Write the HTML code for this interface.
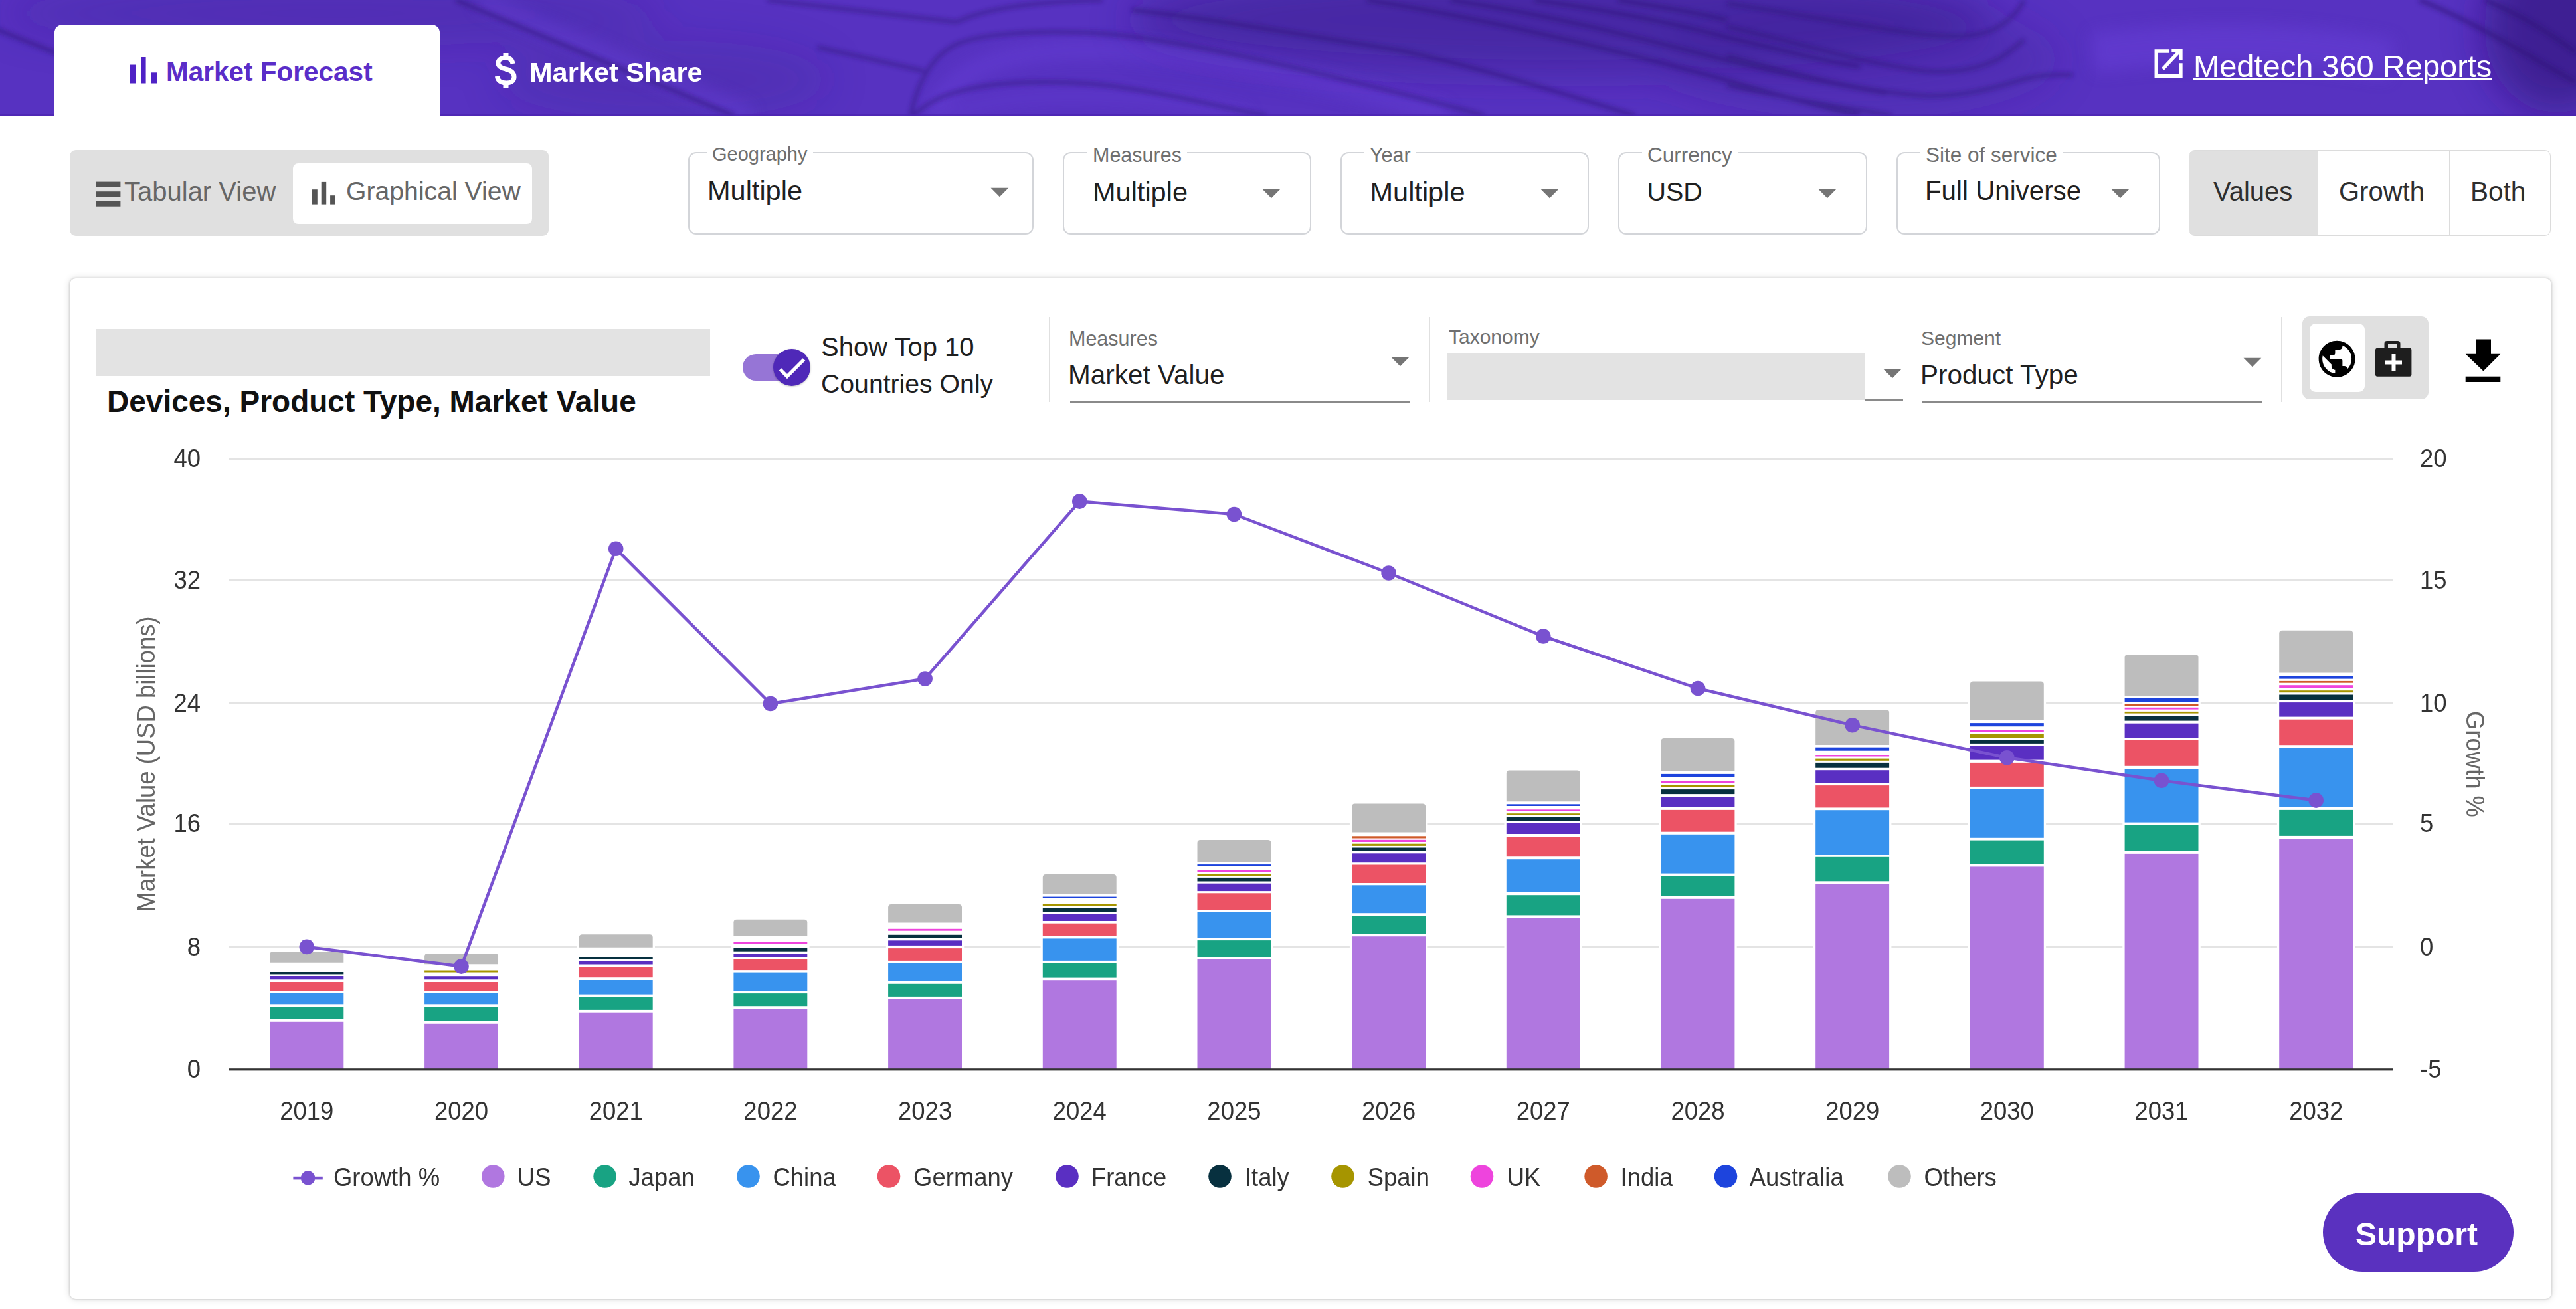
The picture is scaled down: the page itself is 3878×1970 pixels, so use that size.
<!DOCTYPE html>
<html><head><meta charset="utf-8">
<style>
html,body{margin:0;padding:0;width:3878px;height:1970px;overflow:hidden;background:#fff;font-family:"Liberation Sans",sans-serif;}
.a{position:absolute;white-space:nowrap;line-height:1;}
.ct{font-family:"Liberation Sans",sans-serif;font-size:39px;fill:#333;}
.sel{position:absolute;box-sizing:border-box;border:2.8px solid #d3d5d9;border-radius:12px;}
.lbl{position:absolute;white-space:nowrap;line-height:1;font-size:30px;color:#6f6f6f;background:#fff;padding:0 8px;}
.val{position:absolute;white-space:nowrap;line-height:1;font-size:41px;color:#1f1f1f;}
</style></head><body>
<!-- header -->
<div class="a" style="left:0;top:0;width:3878px;height:174px;background:#5430bd;overflow:hidden;">
<svg width="3878" height="174" style="position:absolute;left:0;top:0">
<defs>
<filter id="b4" x="-10%" y="-50%" width="120%" height="200%"><feGaussianBlur stdDeviation="3.5"/></filter>
<filter id="b12" x="-20%" y="-100%" width="140%" height="300%"><feGaussianBlur stdDeviation="12"/></filter>
<filter id="b30" x="-50%" y="-200%" width="200%" height="500%"><feGaussianBlur stdDeviation="30"/></filter>
</defs>
<rect width="3878" height="174" fill="#5732c1"/>
<g filter="url(#b30)">
<ellipse cx="2350" cy="30" rx="650" ry="80" fill="#3b1d8e" opacity="0.55"/>
<ellipse cx="2800" cy="90" rx="300" ry="90" fill="#3b1d8e" opacity="0.25"/>
<ellipse cx="3850" cy="40" rx="110" ry="130" fill="#2e1574" opacity="0.6"/>
<ellipse cx="500" cy="20" rx="500" ry="50" fill="#3b1d8e" opacity="0.25"/>
<ellipse cx="1000" cy="120" rx="250" ry="60" fill="#3b1d8e" opacity="0.2"/>
</g>
<g fill="none" stroke="#6a42dc" filter="url(#b12)" opacity="0.45">
<path d="M1400,174 C1430,110 1500,75 1640,75 C1800,78 2000,120 2180,174" stroke-width="26"/>
<path d="M1420,174 C1480,150 1560,140 1700,148 C1800,155 1850,165 1880,174" stroke-width="14"/>
<path d="M3150,80 C3300,60 3450,60 3600,90" stroke-width="60"/>
<path d="M720,0 L1130,174" stroke-width="24"/>
</g>
<g fill="none" stroke="#2f1677" filter="url(#b4)" opacity="0.6">
<path d="M-10,42 L90,82" stroke-width="6"/>
<path d="M686,0 L1105,174" stroke-width="6"/>
<path d="M1155,0 L1440,33" stroke-width="5"/>
<path d="M1231,71 L1391,107" stroke-width="5"/>
<path d="M1440,33 C1480,15 1540,3 1660,0" stroke-width="5"/>
<path d="M1371,174 C1380,130 1400,85 1441,66 C1480,50 1560,45 1654,50 C1750,56 1900,90 2007,116 C2090,136 2159,152 2234,174" stroke-width="5"/>
<path d="M1375,174 C1400,150 1430,136 1500,127 C1580,120 1650,125 1704,134 C1780,145 1830,160 1906,174" stroke-width="5"/>
<path d="M1704,15 C1800,25 1950,50 2108,76 C2200,95 2320,130 2461,174" stroke-width="6"/>
<path d="M2058,0 C2250,30 2450,80 2600,121 C2700,150 2760,165 2800,174" stroke-width="6"/>
<path d="M2184,0 C2350,25 2480,60 2600,91 C2700,115 2780,130 2840,140" stroke-width="6"/>
<path d="M2310,0 C2420,15 2520,35 2600,56 C2700,80 2760,95 2800,100" stroke-width="6"/>
<path d="M2436,0 C2500,10 2560,20 2600,30" stroke-width="6"/>
<path d="M2600,5 C2700,20 2800,40 2898,52 C2940,56 2972,56 3000,45 C3025,32 3040,15 3047,0" stroke-width="5"/>
<path d="M2600,40 C2700,62 2800,95 2898,107 C2940,110 2980,104 3010,88 C3030,75 3040,65 3047,60" stroke-width="5"/>
<path d="M2600,84 C2700,110 2800,138 2898,144 C2960,146 3010,130 3047,119 C3080,112 3100,112 3121,113" stroke-width="5"/>
<path d="M2600,129 C2700,150 2780,162 2848,174" stroke-width="5"/>
<path d="M3642,0 C3720,30 3800,80 3878,124" stroke-width="7"/>
<path d="M3741,0 C3790,20 3840,50 3878,79" stroke-width="7"/>
</g>
<rect x="0" y="171" width="3878" height="3" fill="#4a22ae" opacity="0.6"/>
</svg>
</div>
<!-- active tab -->
<div class="a" style="left:82px;top:37px;width:580px;height:137px;background:#fff;border-radius:12px 12px 0 0;"></div>
<svg class="a" style="left:190px;top:80px" width="50" height="50">
<rect x="6" y="17.5" width="9" height="28" fill="#4f22c6"/>
<rect x="22.6" y="6" width="7" height="39.5" fill="#4f22c6"/>
<rect x="37.6" y="29.3" width="8.5" height="16.2" fill="#4f22c6"/>
</svg>
<div class="a" style="left:250px;top:88.2px;font-size:40.5px;font-weight:bold;color:#5a2dc8;">Market Forecast</div>
<svg class="a" style="left:740px;top:74px" width="44" height="64" viewBox="0 0 44 64">
<path d="M32,22 C31,15 26,13 21,13 C14,13 10,16.5 10,21 C10,26 14,28 21,30 C29,32 34,35 34,42 C34,48 29,51 22,51 C14,51 9,47 8.5,41" fill="none" stroke="#fff" stroke-width="7"/>
<rect x="17.5" y="6" width="8" height="9" fill="#fff"/><rect x="17.5" y="49" width="8" height="9" fill="#fff"/>
</svg>
<div class="a" style="left:797px;top:87.5px;font-size:41.5px;font-weight:bold;color:#fff;">Market Share</div>
<!-- medtech link -->
<svg class="a" style="left:3240px;top:71px" width="50" height="50" viewBox="0 0 50 50">
<path d="M25.3,6 H6.2 V43.5 H43 V24.3" fill="none" stroke="#fff" stroke-width="5.3"/>
<path d="M16,33 L42,5" stroke="#fff" stroke-width="5.3" fill="none"/>
<path d="M29.3,5 H43 V20" fill="none" stroke="#fff" stroke-width="5.3"/>
</svg>
<div class="a" style="left:3302px;top:75.5px;font-size:47px;color:#fff;text-decoration:underline;text-decoration-thickness:3px;text-underline-offset:1.5px;">Medtech 360 Reports</div>

<!-- view toggle -->
<div class="a" style="left:105px;top:226px;width:721px;height:129px;background:#e0e0e0;border-radius:9px;"></div>
<div class="a" style="left:441px;top:245.5px;width:360px;height:91px;background:#fff;border-radius:8px;"></div>
<svg class="a" style="left:140px;top:268px" width="50" height="50">
<rect x="5" y="5.6" width="36.4" height="8.2" fill="#555"/>
<rect x="5" y="20.2" width="36.4" height="8.2" fill="#555"/>
<rect x="5" y="34.5" width="36.4" height="8.2" fill="#555"/>
</svg>
<div class="a" style="left:187px;top:267.5px;font-size:40px;color:#666;">Tabular View</div>
<svg class="a" style="left:460px;top:265px" width="50" height="50">
<rect x="9.6" y="20.2" width="8.2" height="22.4" fill="#555"/>
<rect x="23.7" y="8.9" width="7.5" height="33.7" fill="#555"/>
<rect x="37.1" y="29.2" width="7.2" height="13.4" fill="#555"/>
</svg>
<div class="a" style="left:521px;top:267.5px;font-size:39.2px;color:#666;">Graphical View</div>

<!-- selects -->
<div class="sel" style="left:1035.5px;top:228.5px;width:520.5px;height:124px;"></div>
<div class="lbl" style="left:1064px;top:218px;font-size:29px;">Geography</div>
<div class="val" style="left:1065px;top:265.5px;font-size:41.5px;">Multiple</div>
<svg class="a" style="left:1491px;top:282px" width="28" height="15"><path d="M0.5,0.7 H27.3 L13.9,14.2 Z" fill="#757575"/></svg>

<div class="sel" style="left:1599.5px;top:228.5px;width:374px;height:124px;"></div>
<div class="lbl" style="left:1637px;top:218px;font-size:30.5px;">Measures</div>
<div class="val" style="left:1645px;top:267.5px;font-size:41.5px;">Multiple</div>
<svg class="a" style="left:1900px;top:284px" width="28" height="15"><path d="M0.5,0.7 H27.3 L13.9,14.2 Z" fill="#757575"/></svg>

<div class="sel" style="left:2017.5px;top:228.5px;width:374px;height:124px;"></div>
<div class="lbl" style="left:2054px;top:218px;font-size:30.5px;">Year</div>
<div class="val" style="left:2062.5px;top:267.5px;font-size:41.5px;">Multiple</div>
<svg class="a" style="left:2319px;top:284px" width="28" height="15"><path d="M0.5,0.7 H27.3 L13.9,14.2 Z" fill="#757575"/></svg>

<div class="sel" style="left:2435.5px;top:228.5px;width:375px;height:124px;"></div>
<div class="lbl" style="left:2472px;top:218px;font-size:31.5px;">Currency</div>
<div class="val" style="left:2479.5px;top:268.5px;font-size:39.5px;">USD</div>
<svg class="a" style="left:2737px;top:284px" width="28" height="15"><path d="M0.5,0.7 H27.3 L13.9,14.2 Z" fill="#757575"/></svg>

<div class="sel" style="left:2854.5px;top:228.5px;width:397px;height:124px;"></div>
<div class="lbl" style="left:2891px;top:218px;font-size:31.5px;">Site of service</div>
<div class="val" style="left:2898px;top:268px;font-size:40.3px;">Full Universe</div>
<svg class="a" style="left:3178px;top:284px" width="28" height="15"><path d="M0.5,0.7 H27.3 L13.9,14.2 Z" fill="#757575"/></svg>

<!-- values/growth/both -->
<div class="a" style="left:3295px;top:226px;width:545px;height:129px;box-sizing:border-box;border:1.5px solid #dcdcdc;border-radius:9px;overflow:hidden;">
<div class="a" style="left:0;top:0;width:193px;height:129px;background:#e0e0e0;"></div>
<div class="a" style="left:391px;top:0;width:1.5px;height:129px;background:#dcdcdc;"></div>
</div>
<div class="a" style="left:3332px;top:267.5px;font-size:40px;color:#2e2e2e;">Values</div>
<div class="a" style="left:3521px;top:267.5px;font-size:40px;color:#2e2e2e;">Growth</div>
<div class="a" style="left:3719px;top:267.5px;font-size:40.5px;color:#2e2e2e;">Both</div>

<!-- card -->
<div class="a" style="left:105px;top:418.5px;width:3736px;height:1536.5px;background:#fff;border-radius:9px;box-shadow:0 0 3px 1px rgba(0,0,0,0.13),0 0 11px 1px rgba(0,0,0,0.11);"></div>
<div class="a" style="left:144px;top:495px;width:925px;height:71px;background:#e3e3e3;"></div>
<div class="a" style="left:161px;top:581px;font-size:46px;font-weight:bold;color:#111;">Devices, Product Type, Market Value</div>
<!-- toggle -->
<div class="a" style="left:1118px;top:532.5px;width:72px;height:40px;background:#9675d6;border-radius:20px;"></div>
<div class="a" style="left:1164.3px;top:524.5px;width:56px;height:56px;background:#4f28b8;border-radius:50%;box-shadow:0 1px 3px rgba(0,0,0,0.25);"></div>
<svg class="a" style="left:1164px;top:524px" width="57" height="57"><path d="M10.5,32 L21,42.5 L46.5,17" fill="none" stroke="#fff" stroke-width="5.2"/></svg>
<div class="a" style="left:1236px;top:502px;font-size:40px;color:#1f1f1f;">Show Top 10</div>
<div class="a" style="left:1236px;top:558px;font-size:39.2px;color:#1f1f1f;">Countries Only</div>
<!-- separators -->
<div class="a" style="left:1579px;top:477px;width:2px;height:128px;background:#e0e0e0;"></div>
<div class="a" style="left:2151px;top:477px;width:2px;height:128px;background:#e0e0e0;"></div>
<div class="a" style="left:3434px;top:477px;width:2px;height:128px;background:#e0e0e0;"></div>
<!-- measures 2 -->
<div class="a" style="left:1609px;top:494px;font-size:30.5px;color:#6f6f6f;">Measures</div>
<div class="a" style="left:1608px;top:544px;font-size:40.5px;color:#1f1f1f;">Market Value</div>
<div class="a" style="left:1611px;top:603.5px;width:511px;height:3px;background:#8a8a8a;"></div>
<svg class="a" style="left:2094px;top:537px" width="28" height="15"><path d="M0.5,0.7 H27.3 L13.9,14.2 Z" fill="#757575"/></svg>
<!-- taxonomy -->
<div class="a" style="left:2181px;top:492px;font-size:30px;color:#6f6f6f;">Taxonomy</div>
<div class="a" style="left:2179px;top:531px;width:628px;height:71px;background:#e3e3e3;"></div>
<div class="a" style="left:2807px;top:601px;width:58px;height:3px;background:#8a8a8a;"></div>
<svg class="a" style="left:2835px;top:555px" width="28" height="15"><path d="M0.5,0.7 H27.3 L13.9,14.2 Z" fill="#757575"/></svg>
<!-- segment -->
<div class="a" style="left:2892px;top:494px;font-size:30px;color:#6f6f6f;">Segment</div>
<div class="a" style="left:2891px;top:544px;font-size:40.5px;color:#1f1f1f;">Product Type</div>
<div class="a" style="left:2894px;top:603.5px;width:511px;height:3px;background:#8a8a8a;"></div>
<svg class="a" style="left:3377px;top:538px" width="28" height="15"><path d="M0.5,0.7 H27.3 L13.9,14.2 Z" fill="#757575"/></svg>
<!-- icon group -->
<div class="a" style="left:3466px;top:476px;width:190px;height:125px;background:#e0e0e0;border-radius:11px;"></div>
<div class="a" style="left:3476.5px;top:487px;width:83px;height:103px;background:#fff;border-radius:9px;"></div>
<svg class="a" style="left:3488px;top:510px" width="60" height="60" viewBox="0 0 24 24" style="">
<path transform="translate(-1.15,-1.15) scale(1.1)" d="M12 2C6.48 2 2 6.48 2 12s4.48 10 10 10 10-4.48 10-10S17.52 2 12 2zm-1 17.93c-3.95-.49-7-3.85-7-7.93 0-.62.08-1.21.21-1.79L9 15v1c0 1.1.9 2 2 2v1.93zm6.9-2.54c-.26-.81-1-1.39-1.9-1.39h-1v-3c0-.55-.45-1-1-1H8v-2h2c.55 0 1-.45 1-1V7h2c1.1 0 2-.9 2-2v-.41c2.93 1.19 5 4.06 5 7.41 0 2.08-.8 3.97-2.1 5.39z" fill="#000"/>
</svg>
<svg class="a" style="left:3573px;top:510px" width="62" height="60">
<path d="M16.5,13 V7 Q16.5,3 20.5,3 H36.5 Q40.5,3 40.5,7 V13 H35 V8 H22 V13 Z" fill="#1e1e1e"/>
<rect x="3" y="13.8" width="54.4" height="43" rx="3" fill="#1e1e1e"/>
<rect x="27.5" y="23" width="6" height="25" fill="#fff"/><rect x="18" y="32.5" width="25" height="6" fill="#fff"/>
</svg>
<svg class="a" style="left:3705px;top:505px" width="66" height="76">
<path d="M22,5.4 H45 V27.8 H59.3 L33.5,53.4 L6.7,27.8 H22 Z" fill="#000"/>
<rect x="6.7" y="61.7" width="52.6" height="8.3" fill="#000"/>
</svg>

<!-- chart -->
<svg class="a" style="left:0;top:0" width="3878" height="1970">
<rect x="344.5" y="689.4" width="3257.5" height="2.6" fill="#e4e4e4"/>
<rect x="344.5" y="871.7" width="3257.5" height="2.6" fill="#e4e4e4"/>
<rect x="344.5" y="1056.7" width="3257.5" height="2.6" fill="#e4e4e4"/>
<rect x="344.5" y="1238.6" width="3257.5" height="2.6" fill="#e4e4e4"/>
<rect x="344.5" y="1423.7" width="3257.5" height="2.6" fill="#e4e4e4"/>
<rect x="403.1" y="1428.6" width="117.5" height="180.4" fill="#fff"/>
<path d="M406.4,1448.7 V1436.4 Q406.4,1431.9 410.9,1431.9 H512.8 Q517.3,1431.9 517.3,1436.4 V1448.7 Z" fill="#bdbdbd"/>
<rect x="406.4" y="1463.0" width="110.9" height="3.4" fill="#07303f"/>
<rect x="406.4" y="1469.0" width="110.9" height="5.3" fill="#5a2fc2"/>
<rect x="406.4" y="1478.0" width="110.9" height="13.6" fill="#ec5365"/>
<rect x="406.4" y="1495.0" width="110.9" height="16.3" fill="#3893ee"/>
<rect x="406.4" y="1515.0" width="110.9" height="19.0" fill="#18a383"/>
<rect x="406.4" y="1537.8" width="110.9" height="71.2" fill="#b077e0"/>
<rect x="635.8" y="1431.7" width="117.5" height="177.3" fill="#fff"/>
<path d="M639.1,1451.3 V1439.5 Q639.1,1435.0 643.6,1435.0 H745.5 Q750.0,1435.0 750.0,1439.5 V1451.3 Z" fill="#bdbdbd"/>
<rect x="639.1" y="1460.5" width="110.9" height="3.0" fill="#a69500"/>
<rect x="639.1" y="1469.2" width="110.9" height="5.1" fill="#5a2fc2"/>
<rect x="639.1" y="1478.0" width="110.9" height="13.6" fill="#ec5365"/>
<rect x="639.1" y="1495.0" width="110.9" height="16.3" fill="#3893ee"/>
<rect x="639.1" y="1515.0" width="110.9" height="22.0" fill="#18a383"/>
<rect x="639.1" y="1540.8" width="110.9" height="68.2" fill="#b077e0"/>
<rect x="868.5" y="1403.0" width="117.5" height="206.0" fill="#fff"/>
<path d="M871.8,1425.8 V1410.8 Q871.8,1406.3 876.3,1406.3 H978.2 Q982.7,1406.3 982.7,1410.8 V1425.8 Z" fill="#bdbdbd"/>
<rect x="871.8" y="1440.7" width="110.9" height="2.4" fill="#07303f"/>
<rect x="871.8" y="1446.8" width="110.9" height="4.7" fill="#5a2fc2"/>
<rect x="871.8" y="1455.4" width="110.9" height="15.8" fill="#ec5365"/>
<rect x="871.8" y="1475.0" width="110.9" height="21.6" fill="#3893ee"/>
<rect x="871.8" y="1500.8" width="110.9" height="19.1" fill="#18a383"/>
<rect x="871.8" y="1523.7" width="110.9" height="85.3" fill="#b077e0"/>
<rect x="1101.1" y="1380.5" width="117.5" height="228.5" fill="#fff"/>
<path d="M1104.4,1408.8 V1388.3 Q1104.4,1383.8 1108.9,1383.8 H1210.8 Q1215.3,1383.8 1215.3,1388.3 V1408.8 Z" fill="#bdbdbd"/>
<rect x="1104.4" y="1417.7" width="110.9" height="2.9" fill="#ee44dd"/>
<rect x="1104.4" y="1426.3" width="110.9" height="5.4" fill="#07303f"/>
<rect x="1104.4" y="1435.3" width="110.9" height="5.0" fill="#5a2fc2"/>
<rect x="1104.4" y="1443.9" width="110.9" height="16.2" fill="#ec5365"/>
<rect x="1104.4" y="1463.6" width="110.9" height="27.7" fill="#3893ee"/>
<rect x="1104.4" y="1495.1" width="110.9" height="19.1" fill="#18a383"/>
<rect x="1104.4" y="1518.0" width="110.9" height="91.0" fill="#b077e0"/>
<rect x="1333.8" y="1357.8" width="117.5" height="251.2" fill="#fff"/>
<path d="M1337.1,1388.5 V1365.6 Q1337.1,1361.1 1341.6,1361.1 H1443.5 Q1448.0,1361.1 1448.0,1365.6 V1388.5 Z" fill="#bdbdbd"/>
<rect x="1337.1" y="1397.8" width="110.9" height="2.9" fill="#ee44dd"/>
<rect x="1337.1" y="1406.8" width="110.9" height="4.9" fill="#07303f"/>
<rect x="1337.1" y="1415.3" width="110.9" height="7.6" fill="#5a2fc2"/>
<rect x="1337.1" y="1427.1" width="110.9" height="18.8" fill="#ec5365"/>
<rect x="1337.1" y="1449.6" width="110.9" height="26.8" fill="#3893ee"/>
<rect x="1337.1" y="1480.8" width="110.9" height="19.1" fill="#18a383"/>
<rect x="1337.1" y="1503.6" width="110.9" height="105.4" fill="#b077e0"/>
<rect x="1566.5" y="1312.6" width="117.5" height="296.4" fill="#fff"/>
<path d="M1569.8,1345.7 V1320.4 Q1569.8,1315.9 1574.3,1315.9 H1676.2 Q1680.7,1315.9 1680.7,1320.4 V1345.7 Z" fill="#bdbdbd"/>
<rect x="1569.8" y="1349.6" width="110.9" height="2.4" fill="#1d44dd"/>
<rect x="1569.8" y="1360.6" width="110.9" height="2.9" fill="#a69500"/>
<rect x="1569.8" y="1366.7" width="110.9" height="5.4" fill="#07303f"/>
<rect x="1569.8" y="1375.8" width="110.9" height="10.2" fill="#5a2fc2"/>
<rect x="1569.8" y="1389.7" width="110.9" height="19.0" fill="#ec5365"/>
<rect x="1569.8" y="1412.4" width="110.9" height="33.5" fill="#3893ee"/>
<rect x="1569.8" y="1449.6" width="110.9" height="22.0" fill="#18a383"/>
<rect x="1569.8" y="1475.2" width="110.9" height="133.8" fill="#b077e0"/>
<rect x="1799.2" y="1260.8" width="117.5" height="348.2" fill="#fff"/>
<path d="M1802.5,1297.9 V1268.6 Q1802.5,1264.1 1807.0,1264.1 H1908.9 Q1913.4,1264.1 1913.4,1268.6 V1297.9 Z" fill="#bdbdbd"/>
<rect x="1802.5" y="1301.1" width="110.9" height="2.6" fill="#1d44dd"/>
<rect x="1802.5" y="1309.2" width="110.9" height="3.3" fill="#ee44dd"/>
<rect x="1802.5" y="1315.1" width="110.9" height="3.2" fill="#a69500"/>
<rect x="1802.5" y="1320.9" width="110.9" height="5.6" fill="#07303f"/>
<rect x="1802.5" y="1329.7" width="110.9" height="11.4" fill="#5a2fc2"/>
<rect x="1802.5" y="1344.3" width="110.9" height="25.0" fill="#ec5365"/>
<rect x="1802.5" y="1372.5" width="110.9" height="39.0" fill="#3893ee"/>
<rect x="1802.5" y="1415.1" width="110.9" height="24.9" fill="#18a383"/>
<rect x="1802.5" y="1443.9" width="110.9" height="165.1" fill="#b077e0"/>
<rect x="2031.9" y="1206.3" width="117.5" height="402.7" fill="#fff"/>
<path d="M2035.2,1252.4 V1214.1 Q2035.2,1209.6 2039.7,1209.6 H2141.6 Q2146.1,1209.6 2146.1,1214.1 V1252.4 Z" fill="#bdbdbd"/>
<rect x="2035.2" y="1258.3" width="110.9" height="3.2" fill="#cf5a2a"/>
<rect x="2035.2" y="1263.8" width="110.9" height="3.2" fill="#ee44dd"/>
<rect x="2035.2" y="1269.7" width="110.9" height="3.2" fill="#a69500"/>
<rect x="2035.2" y="1275.5" width="110.9" height="5.5" fill="#07303f"/>
<rect x="2035.2" y="1284.3" width="110.9" height="13.9" fill="#5a2fc2"/>
<rect x="2035.2" y="1301.5" width="110.9" height="27.5" fill="#ec5365"/>
<rect x="2035.2" y="1332.3" width="110.9" height="41.9" fill="#3893ee"/>
<rect x="2035.2" y="1378.4" width="110.9" height="27.6" fill="#18a383"/>
<rect x="2035.2" y="1409.2" width="110.9" height="199.8" fill="#b077e0"/>
<rect x="2264.5" y="1156.2" width="117.5" height="452.8" fill="#fff"/>
<path d="M2267.8,1206.3 V1164.0 Q2267.8,1159.5 2272.3,1159.5 H2374.2 Q2378.7,1159.5 2378.7,1164.0 V1206.3 Z" fill="#bdbdbd"/>
<rect x="2267.8" y="1210.3" width="110.9" height="2.7" fill="#1d44dd"/>
<rect x="2267.8" y="1218.3" width="110.9" height="2.7" fill="#ee44dd"/>
<rect x="2267.8" y="1224.2" width="110.9" height="2.7" fill="#a69500"/>
<rect x="2267.8" y="1229.8" width="110.9" height="5.4" fill="#07303f"/>
<rect x="2267.8" y="1238.9" width="110.9" height="16.1" fill="#5a2fc2"/>
<rect x="2267.8" y="1259.0" width="110.9" height="30.2" fill="#ec5365"/>
<rect x="2267.8" y="1293.2" width="110.9" height="49.4" fill="#3893ee"/>
<rect x="2267.8" y="1347.2" width="110.9" height="30.2" fill="#18a383"/>
<rect x="2267.8" y="1381.4" width="110.9" height="227.6" fill="#b077e0"/>
<rect x="2497.2" y="1107.6" width="117.5" height="501.4" fill="#fff"/>
<path d="M2500.5,1160.8 V1115.4 Q2500.5,1110.9 2505.0,1110.9 H2606.9 Q2611.4,1110.9 2611.4,1115.4 V1160.8 Z" fill="#bdbdbd"/>
<rect x="2500.5" y="1164.9" width="110.9" height="4.8" fill="#1d44dd"/>
<rect x="2500.5" y="1175.5" width="110.9" height="2.7" fill="#ee44dd"/>
<rect x="2500.5" y="1181.4" width="110.9" height="2.7" fill="#a69500"/>
<rect x="2500.5" y="1188.1" width="110.9" height="7.0" fill="#07303f"/>
<rect x="2500.5" y="1199.1" width="110.9" height="15.8" fill="#5a2fc2"/>
<rect x="2500.5" y="1218.9" width="110.9" height="32.8" fill="#ec5365"/>
<rect x="2500.5" y="1255.8" width="110.9" height="58.8" fill="#3893ee"/>
<rect x="2500.5" y="1318.6" width="110.9" height="30.2" fill="#18a383"/>
<rect x="2500.5" y="1352.8" width="110.9" height="256.2" fill="#b077e0"/>
<rect x="2729.9" y="1064.7" width="117.5" height="544.3" fill="#fff"/>
<path d="M2733.2,1120.9 V1072.5 Q2733.2,1068.0 2737.7,1068.0 H2839.6 Q2844.1,1068.0 2844.1,1072.5 V1120.9 Z" fill="#bdbdbd"/>
<rect x="2733.2" y="1124.7" width="110.9" height="5.0" fill="#1d44dd"/>
<rect x="2733.2" y="1136.0" width="110.9" height="2.5" fill="#ee44dd"/>
<rect x="2733.2" y="1141.6" width="110.9" height="3.2" fill="#a69500"/>
<rect x="2733.2" y="1147.9" width="110.9" height="7.8" fill="#07303f"/>
<rect x="2733.2" y="1159.2" width="110.9" height="18.9" fill="#5a2fc2"/>
<rect x="2733.2" y="1182.1" width="110.9" height="33.3" fill="#ec5365"/>
<rect x="2733.2" y="1219.2" width="110.9" height="66.8" fill="#3893ee"/>
<rect x="2733.2" y="1289.8" width="110.9" height="36.5" fill="#18a383"/>
<rect x="2733.2" y="1330.1" width="110.9" height="278.9" fill="#b077e0"/>
<rect x="2962.6" y="1022.3" width="117.5" height="586.7" fill="#fff"/>
<path d="M2965.9,1083.8 V1030.1 Q2965.9,1025.6 2970.4,1025.6 H3072.3 Q3076.8,1025.6 3076.8,1030.1 V1083.8 Z" fill="#bdbdbd"/>
<rect x="2965.9" y="1088.1" width="110.9" height="5.1" fill="#1d44dd"/>
<rect x="2965.9" y="1098.7" width="110.9" height="2.5" fill="#ee44dd"/>
<rect x="2965.9" y="1105.0" width="110.9" height="5.3" fill="#a69500"/>
<rect x="2965.9" y="1113.8" width="110.9" height="5.1" fill="#07303f"/>
<rect x="2965.9" y="1122.7" width="110.9" height="20.9" fill="#5a2fc2"/>
<rect x="2965.9" y="1147.9" width="110.9" height="36.0" fill="#ec5365"/>
<rect x="2965.9" y="1187.7" width="110.9" height="73.1" fill="#3893ee"/>
<rect x="2965.9" y="1264.6" width="110.9" height="36.0" fill="#18a383"/>
<rect x="2965.9" y="1304.4" width="110.9" height="304.6" fill="#b077e0"/>
<rect x="3195.3" y="981.7" width="117.5" height="627.3" fill="#fff"/>
<path d="M3198.6,1046.9 V989.5 Q3198.6,985.0 3203.1,985.0 H3305.0 Q3309.5,985.0 3309.5,989.5 V1046.9 Z" fill="#bdbdbd"/>
<rect x="3198.6" y="1050.5" width="110.9" height="5.5" fill="#1d44dd"/>
<rect x="3198.6" y="1059.3" width="110.9" height="2.7" fill="#cf5a2a"/>
<rect x="3198.6" y="1064.8" width="110.9" height="2.8" fill="#ee44dd"/>
<rect x="3198.6" y="1070.9" width="110.9" height="2.7" fill="#a69500"/>
<rect x="3198.6" y="1077.2" width="110.9" height="7.4" fill="#07303f"/>
<rect x="3198.6" y="1088.7" width="110.9" height="21.5" fill="#5a2fc2"/>
<rect x="3198.6" y="1113.8" width="110.9" height="39.0" fill="#ec5365"/>
<rect x="3198.6" y="1157.0" width="110.9" height="80.6" fill="#3893ee"/>
<rect x="3198.6" y="1241.7" width="110.9" height="39.1" fill="#18a383"/>
<rect x="3198.6" y="1284.9" width="110.9" height="324.1" fill="#b077e0"/>
<rect x="3427.9" y="945.4" width="117.5" height="663.6" fill="#fff"/>
<path d="M3431.2,1012.5 V953.2 Q3431.2,948.7 3435.7,948.7 H3537.6 Q3542.1,948.7 3542.1,953.2 V1012.5 Z" fill="#bdbdbd"/>
<rect x="3431.2" y="1017.2" width="110.9" height="4.4" fill="#1d44dd"/>
<rect x="3431.2" y="1024.9" width="110.9" height="2.8" fill="#cf5a2a"/>
<rect x="3431.2" y="1031.2" width="110.9" height="4.7" fill="#ee44dd"/>
<rect x="3431.2" y="1039.2" width="110.9" height="3.0" fill="#a69500"/>
<rect x="3431.2" y="1045.5" width="110.9" height="7.5" fill="#07303f"/>
<rect x="3431.2" y="1057.1" width="110.9" height="21.5" fill="#5a2fc2"/>
<rect x="3431.2" y="1082.7" width="110.9" height="38.5" fill="#ec5365"/>
<rect x="3431.2" y="1125.3" width="110.9" height="89.4" fill="#3893ee"/>
<rect x="3431.2" y="1218.9" width="110.9" height="39.0" fill="#18a383"/>
<rect x="3431.2" y="1262.0" width="110.9" height="347.0" fill="#b077e0"/>
<rect x="344" y="1608.2" width="3258" height="3.2" fill="#333"/>
<polyline points="461.8,1424.9 694.5,1454.6 927.2,825.8 1159.9,1059.0 1392.6,1021.5 1625.3,754.6 1857.9,774.0 2090.6,862.5 2323.3,957.5 2556.0,1036.0 2788.7,1091.2 3021.3,1140.3 3254.0,1174.8 3486.7,1204.6" fill="none" stroke="#7952d0" stroke-width="4.5" stroke-linejoin="round"/>
<circle cx="461.8" cy="1424.9" r="11.3" fill="#7952d0"/>
<circle cx="694.5" cy="1454.6" r="11.3" fill="#7952d0"/>
<circle cx="927.2" cy="825.8" r="11.3" fill="#7952d0"/>
<circle cx="1159.9" cy="1059.0" r="11.3" fill="#7952d0"/>
<circle cx="1392.6" cy="1021.5" r="11.3" fill="#7952d0"/>
<circle cx="1625.3" cy="754.6" r="11.3" fill="#7952d0"/>
<circle cx="1857.9" cy="774.0" r="11.3" fill="#7952d0"/>
<circle cx="2090.6" cy="862.5" r="11.3" fill="#7952d0"/>
<circle cx="2323.3" cy="957.5" r="11.3" fill="#7952d0"/>
<circle cx="2556.0" cy="1036.0" r="11.3" fill="#7952d0"/>
<circle cx="2788.7" cy="1091.2" r="11.3" fill="#7952d0"/>
<circle cx="3021.3" cy="1140.3" r="11.3" fill="#7952d0"/>
<circle cx="3254.0" cy="1174.8" r="11.3" fill="#7952d0"/>
<circle cx="3486.7" cy="1204.6" r="11.3" fill="#7952d0"/>
<text transform="translate(302.0,703.2) scale(0.935,1)" text-anchor="end" class="ct">40</text>
<text transform="translate(3643.0,703.2) scale(0.935,1)" class="ct">20</text>
<text transform="translate(302.0,885.5) scale(0.935,1)" text-anchor="end" class="ct">32</text>
<text transform="translate(3643.0,885.5) scale(0.935,1)" class="ct">15</text>
<text transform="translate(302.0,1070.5) scale(0.935,1)" text-anchor="end" class="ct">24</text>
<text transform="translate(3643.0,1070.5) scale(0.935,1)" class="ct">10</text>
<text transform="translate(302.0,1252.4) scale(0.935,1)" text-anchor="end" class="ct">16</text>
<text transform="translate(3643.0,1252.4) scale(0.935,1)" class="ct">5</text>
<text transform="translate(302.0,1437.5) scale(0.935,1)" text-anchor="end" class="ct">8</text>
<text transform="translate(3643.0,1437.5) scale(0.935,1)" class="ct">0</text>
<text transform="translate(302.0,1622.4) scale(0.935,1)" text-anchor="end" class="ct">0</text>
<text transform="translate(3643.0,1622.4) scale(0.935,1)" class="ct">-5</text>
<text transform="translate(461.8,1685.0) scale(0.935,1)" text-anchor="middle" class="ct">2019</text>
<text transform="translate(694.5,1685.0) scale(0.935,1)" text-anchor="middle" class="ct">2020</text>
<text transform="translate(927.2,1685.0) scale(0.935,1)" text-anchor="middle" class="ct">2021</text>
<text transform="translate(1159.9,1685.0) scale(0.935,1)" text-anchor="middle" class="ct">2022</text>
<text transform="translate(1392.6,1685.0) scale(0.935,1)" text-anchor="middle" class="ct">2023</text>
<text transform="translate(1625.3,1685.0) scale(0.935,1)" text-anchor="middle" class="ct">2024</text>
<text transform="translate(1857.9,1685.0) scale(0.935,1)" text-anchor="middle" class="ct">2025</text>
<text transform="translate(2090.6,1685.0) scale(0.935,1)" text-anchor="middle" class="ct">2026</text>
<text transform="translate(2323.3,1685.0) scale(0.935,1)" text-anchor="middle" class="ct">2027</text>
<text transform="translate(2556.0,1685.0) scale(0.935,1)" text-anchor="middle" class="ct">2028</text>
<text transform="translate(2788.7,1685.0) scale(0.935,1)" text-anchor="middle" class="ct">2029</text>
<text transform="translate(3021.3,1685.0) scale(0.935,1)" text-anchor="middle" class="ct">2030</text>
<text transform="translate(3254.0,1685.0) scale(0.935,1)" text-anchor="middle" class="ct">2031</text>
<text transform="translate(3486.7,1685.0) scale(0.935,1)" text-anchor="middle" class="ct">2032</text>
<text transform="translate(233,1150) rotate(-90) scale(0.935,1)" text-anchor="middle" class="ct" style="fill:#666">Market Value (USD billions)</text>
<text transform="translate(3713,1150) rotate(90) scale(0.935,1)" text-anchor="middle" class="ct" style="fill:#666">Growth %</text>
<rect x="441.4" y="1770.8" width="44.4" height="4.6" fill="#7952d0"/><circle cx="463.6" cy="1773" r="10.7" fill="#7952d0"/>
<text transform="translate(502.0,1784.5) scale(0.935,1)" class="ct">Growth %</text>
<circle cx="742.3" cy="1770.5" r="17.3" fill="#b077e0"/>
<text transform="translate(778.8,1784.5) scale(0.935,1)" class="ct">US</text>
<circle cx="910.6" cy="1770.5" r="17.3" fill="#18a383"/>
<text transform="translate(946.5,1784.5) scale(0.935,1)" class="ct">Japan</text>
<circle cx="1126.5" cy="1770.5" r="17.3" fill="#3893ee"/>
<text transform="translate(1163.5,1784.5) scale(0.935,1)" class="ct">China</text>
<circle cx="1338" cy="1770.5" r="17.3" fill="#ec5365"/>
<text transform="translate(1375.1,1784.5) scale(0.935,1)" class="ct">Germany</text>
<circle cx="1606.5" cy="1770.5" r="17.3" fill="#5a2fc2"/>
<text transform="translate(1642.9,1784.5) scale(0.935,1)" class="ct">France</text>
<circle cx="1836.5" cy="1770.5" r="17.3" fill="#07303f"/>
<text transform="translate(1873.9,1784.5) scale(0.935,1)" class="ct">Italy</text>
<circle cx="2021.5" cy="1770.5" r="17.3" fill="#a69500"/>
<text transform="translate(2058.7,1784.5) scale(0.935,1)" class="ct">Spain</text>
<circle cx="2231" cy="1770.5" r="17.3" fill="#ee44dd"/>
<text transform="translate(2268.7,1784.5) scale(0.935,1)" class="ct">UK</text>
<circle cx="2402.6" cy="1770.5" r="17.3" fill="#cf5a2a"/>
<text transform="translate(2439.5,1784.5) scale(0.935,1)" class="ct">India</text>
<circle cx="2598" cy="1770.5" r="17.3" fill="#1d44dd"/>
<text transform="translate(2633.8,1784.5) scale(0.935,1)" class="ct">Australia</text>
<circle cx="2859.5" cy="1770.5" r="17.3" fill="#bdbdbd"/>
<text transform="translate(2896.4,1784.5) scale(0.935,1)" class="ct">Others</text>
</svg>

<!-- support -->
<div class="a" style="left:3496.5px;top:1795px;width:287px;height:119px;background:#5a31bf;border-radius:60px;"></div>
<div class="a" style="left:3546px;top:1834px;font-size:48px;font-weight:bold;color:#fff;">Support</div>
</body></html>
